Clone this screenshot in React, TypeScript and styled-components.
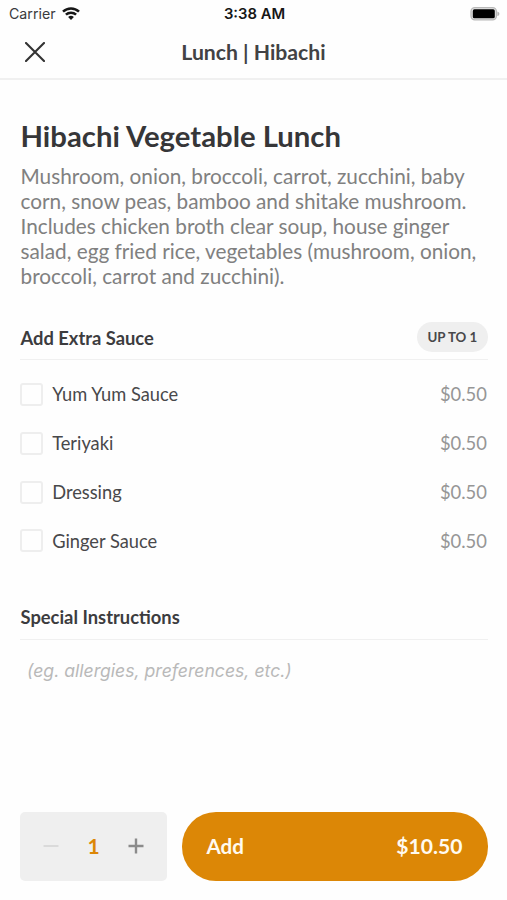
import React from 'react';
import styled, { createGlobalStyle } from 'styled-components';

const GlobalStyle = createGlobalStyle`
  *, *::before, *::after { box-sizing: border-box; }
  body { margin: 0; background: #fefefe; }
  button, input { font: inherit; color: inherit; border: 0; background: none; padding: 0; margin: 0; }
`;

const Screen = styled.div`
  display: flex;
  flex-direction: column;
  height: 900px;
  background: #fefefe;
  color: #3c3c3e;
  font-family: Lato, 'Open Sans', sans-serif;
`;

const StatusBar = styled.div`
  display: grid;
  grid-template-columns: 1fr auto 1fr;
  align-items: center;
  height: 27px;
  padding: 0 7px 0 9px;
  font-family: Inter, 'Liberation Sans', sans-serif;
  font-size: 14.2px;
  color: #3a3a3c;
`;

const Carrier = styled.div`
  display: flex;
  align-items: center;
  gap: 6.5px;
`;

const Clock = styled.div`
  font-size: 14.8px;
  font-weight: 600;
  color: #161616;
`;

const BatteryIcon = styled.svg`
  justify-self: end;
`;

const NavBar = styled.header`
  display: grid;
  grid-template-columns: 70px 1fr 70px;
  align-items: center;
  height: 53px;
  border-bottom: 2px solid #f0f0f0;
`;

const CloseButton = styled.button`
  display: flex;
  justify-content: center;
  padding-bottom: 1px;
  color: #333;
`;

const NavTitle = styled.div`
  text-align: center;
  padding-bottom: 2px;
  font-size: 21.2px;
  font-weight: 700;
  line-height: 26px;
  color: #424244;
`;

const Content = styled.main`
  flex: 1;
  padding: 38px 19.5px 0 20px;
`;

const ItemTitle = styled.h1`
  margin: 0;
  padding-left: 0.5px;
  font-size: 29.3px;
  font-weight: 700;
  line-height: 36px;
  color: #363638;
`;

const Description = styled.p`
  margin: 10px 0 0;
  padding-left: 0.5px;
  font-size: 20.77px;
  line-height: 24.9px;
  color: #808080;
`;

const SectionHeader = styled.div<{ $top: number }>`
  display: flex;
  align-items: center;
  justify-content: space-between;
  height: 38px;
  margin-top: ${(p) => p.$top}px;
  padding-bottom: 7px;
  border-bottom: 1px solid #f0f0f0;
`;

const SectionTitle = styled.h2<{ $offset: number }>`
  margin: ${(p) => p.$offset}px 0 0;
  padding-left: 0.5px;
  font-size: 18.35px;
  font-weight: 700;
  line-height: 24px;
  color: #3c3c3e;
`;

const Badge = styled.span`
  height: 30px;
  padding: 0 10.2px;
  border-radius: 15px;
  background: #efefef;
  font-size: 13.3px;
  font-weight: 700;
  line-height: 30px;
  color: #48484a;
`;

const Options = styled.ul`
  list-style: none;
  margin: 0;
  padding: 10.5px 0 0;
`;

const Option = styled.li`
  display: flex;
  align-items: center;
  height: 48.8px;
  font-size: 18.25px;
`;

const Checkbox = styled.span`
  width: 23px;
  height: 23px;
  margin-right: 9.2px;
  border: 2px solid #eeeeee;
  border-radius: 3px;
`;

const OptionName = styled.span`
  flex: 1;
  color: #48484a;
`;

const OptionPrice = styled.span`
  padding-right: 0.6px;
  font-size: 18.4px;
  color: #969696;
`;

const Instructions = styled.input`
  display: block;
  width: 100%;
  height: 30px;
  margin-top: 16px;
  padding-left: 7px;
  font-family: Inter, 'Liberation Sans', sans-serif;
  font-size: 17.62px;
  font-style: italic;
  &::placeholder { color: #b9b9b9; opacity: 1; }
`;

const Footer = styled.footer`
  display: flex;
  gap: 15px;
  height: 108px;
  padding: 20px 19.5px 19.5px 20px;
`;

const Stepper = styled.div`
  display: grid;
  grid-template-columns: 62px 22px 63px;
  align-items: center;
  justify-items: center;
  width: 147px;
  background: #efefef;
  border-radius: 5px;
`;

const StepButton = styled.button<{ $muted?: boolean }>`
  display: flex;
  color: ${(p) => (p.$muted ? '#dadada' : '#8b8b8b')};
`;

const Quantity = styled.span`
  padding: 0 0 2px 1px;
  font-size: 21px;
  font-weight: 700;
  color: #dc8706;
`;

const AddButton = styled.button`
  flex: 1;
  display: flex;
  align-items: center;
  justify-content: space-between;
  padding: 0 25px 0 24.5px;
  border-radius: 34px;
  background: #dc8706;
  color: #fffaf0;
  font-size: 20.6px;
  font-weight: 700;
`;

const Total = styled.span`
  padding-bottom: 1px;
  font-size: 21.1px;
`;

const sauces = ['Yum Yum Sauce', 'Teriyaki', 'Dressing', 'Ginger Sauce'];

export default function App() {
  return (
    <>
      <GlobalStyle />
      <Screen>
        <StatusBar>
          <Carrier>
            Carrier
            <svg width="18" height="14" viewBox="0 0 18 14" fill="none" stroke="#161616" strokeWidth="2.5">
              <path d="M1 4.6a11.6 11.6 0 0 1 16 0" />
              <path d="M3.9 7.7a7.4 7.4 0 0 1 10.2 0" />
              <path d="M9 13.1 6.1 10.1a4.2 4.2 0 0 1 5.8 0z" fill="#161616" stroke="none" />
            </svg>
          </Carrier>
          <Clock>3:38 AM</Clock>
          <BatteryIcon width="30" height="14" viewBox="0 0 30 14">
            <rect x="1" y="0.7" width="25.4" height="12.2" rx="3.8" fill="#e4e4e4" stroke="#b8b8b8" strokeWidth="1.3" />
            <rect x="2.8" y="2.3" width="22" height="9" rx="1.6" fill="#000" />
            <path d="M27.4 4.5c2.6.8 2.6 3.8 0 4.6z" fill="#b4b4b4" />
          </BatteryIcon>
        </StatusBar>
        <NavBar>
          <CloseButton aria-label="Close">
            <svg width="20" height="20" viewBox="0 0 20 20" fill="none" stroke="currentColor" strokeWidth="2.1" strokeLinecap="round">
              <path d="M1 1l18 18M19 1L1 19" />
            </svg>
          </CloseButton>
          <NavTitle>Lunch | Hibachi</NavTitle>
        </NavBar>
        <Content>
          <ItemTitle>Hibachi Vegetable Lunch</ItemTitle>
          <Description>
            Mushroom, onion, broccoli, carrot, zucchini, baby corn, snow peas, bamboo and shitake
            mushroom. Includes chicken broth clear soup, house ginger salad, egg fried rice,
            vegetables (mushroom, onion, broccoli, carrot and zucchini).
          </Description>
          <SectionHeader $top={33}>
            <SectionTitle $offset={2}>Add Extra Sauce</SectionTitle>
            <Badge>UP TO 1</Badge>
          </SectionHeader>
          <Options>
            {sauces.map((name) => (
              <Option key={name}>
                <Checkbox />
                <OptionName>{name}</OptionName>
                <OptionPrice>$0.50</OptionPrice>
              </Option>
            ))}
          </Options>
          <SectionHeader $top={36.5}>
            <SectionTitle $offset={0.5}>Special Instructions</SectionTitle>
          </SectionHeader>
          <Instructions placeholder="(eg. allergies, preferences, etc.)" />
        </Content>
        <Footer>
          <Stepper>
            <StepButton $muted aria-label="Decrease">
              <svg width="16" height="16" viewBox="0 0 16 16" fill="none" stroke="currentColor" strokeWidth="2">
                <path d="M0.5 8h15" />
              </svg>
            </StepButton>
            <Quantity>1</Quantity>
            <StepButton aria-label="Increase">
              <svg width="16" height="16" viewBox="0 0 16 16" fill="none" stroke="currentColor" strokeWidth="2.4">
                <path d="M0.5 8h15M8 0.5v15" />
              </svg>
            </StepButton>
          </Stepper>
          <AddButton>
            <span>Add</span>
            <Total>$10.50</Total>
          </AddButton>
        </Footer>
      </Screen>
    </>
  );
}
